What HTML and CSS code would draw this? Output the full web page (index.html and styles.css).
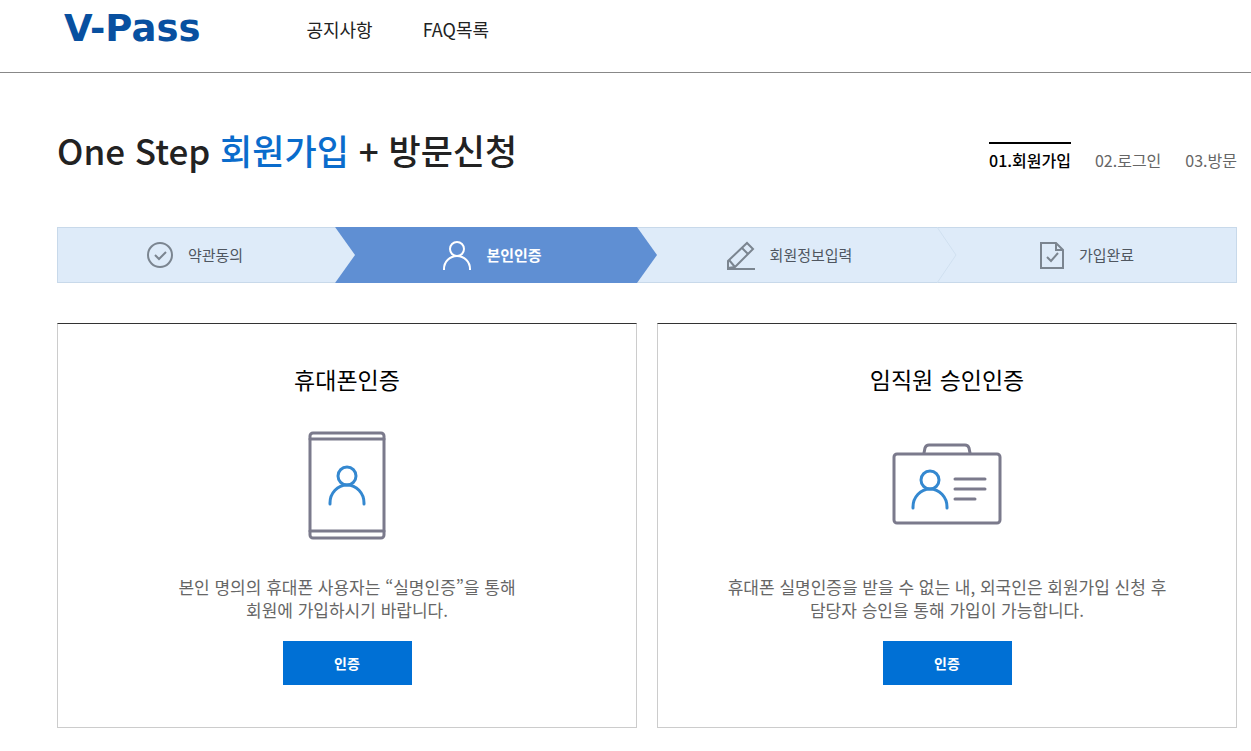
FILE: index.html
```html
<!DOCTYPE html>
<html lang="ko">
<head>
    <meta charset="UTF-8">
    <meta name="viewport" content="width=device-width, initial-scale=1.0">
    <title>V-Pass 회원가입</title>
    <link rel="stylesheet" href="styles.css">
</head>
<body>
    <header class="header">
        <a class="logo" href="#">V-Pass</a>
        <nav class="gnb">
            <a href="#">공지사항</a>
            <a href="#">FAQ목록</a>
        </nav>
    </header>

    <main class="container">
        <div class="title-row">
            <h1>One Step <span>회원가입</span> + 방문신청</h1>
            <nav class="tabs">
                <a class="on" href="#">01.회원가입</a>
                <a href="#">02.로그인</a>
                <a href="#">03.방문</a>
            </nav>
        </div>

        <ol class="steps">
            <li class="step">
                <svg class="icon" width="28" height="30" viewBox="0 0 28 30">
                    <circle cx="14" cy="15" r="12"/>
                    <path d="M9 15l4 4 7-7"/>
                </svg>
                <span>약관동의</span>
                <svg class="arrow" viewBox="0 0 20 56"><path d="M0 0L20 28L0 56z"/></svg>
            </li>
            <li class="step active">
                <svg class="icon" width="30" height="30" viewBox="0 0 30 30">
                    <circle cx="15" cy="9" r="7"/>
                    <path d="M2 30v-1a13 13 0 0 1 26 0v1"/>
                </svg>
                <span>본인인증</span>
                <svg class="arrow" viewBox="0 0 20 56"><path d="M0 0L20 28L0 56z"/></svg>
            </li>
            <li class="step">
                <svg class="icon" width="30" height="30" viewBox="0 0 30 30">
                    <path d="M1 29h28"/>
                    <path d="M2 28v-7L21 3l6 6L9 27z"/>
                    <path d="M3 20l6 7M16 8l6 6"/>
                </svg>
                <span>회원정보입력</span>
                <svg class="arrow line" viewBox="0 0 20 56"><path d="M0 0L19 28L0 56"/></svg>
            </li>
            <li class="step">
                <svg class="icon" width="26" height="30" viewBox="0 0 26 30">
                    <path d="M2 3h15l7 7v18H2z"/>
                    <path d="M17 3v7h7M8 17l4 4 7-8"/>
                </svg>
                <span>가입완료</span>
            </li>
        </ol>

        <div class="cards">
            <section class="card">
                <h2>휴대폰인증</h2>
                <svg class="picture" width="110" height="110" viewBox="0 0 110 110">
                    <rect x="18" y="3" width="74" height="105" rx="3"/>
                    <path d="M18 9h74M18 101h74"/>
                    <g class="person">
                        <circle cx="55" cy="46" r="9"/>
                        <path d="M38 74v-1a17 18 0 0 1 34 0v1"/>
                    </g>
                </svg>
                <p>본인 명의의 휴대폰 사용자는 “실명인증”을 통해<br>회원에 가입하시기 바랍니다.</p>
                <button type="button">인증</button>
            </section>
            <section class="card">
                <h2>임직원 승인인증</h2>
                <svg class="picture" width="110" height="110" viewBox="0 0 110 110">
                    <rect x="2" y="24" width="106" height="69" rx="3"/>
                    <path d="M32 23l1-5q1-3 4-3h36q3 0 4 3l1 5"/>
                    <path d="M63 49h30M63 59h30M63 69h20"/>
                    <g class="person">
                        <circle cx="38" cy="50" r="9"/>
                        <path d="M21 78v-1a17 18 0 0 1 34 0v1"/>
                    </g>
                </svg>
                <p>휴대폰 실명인증을 받을 수 없는 내, 외국인은 회원가입 신청 후<br>담당자 승인을 통해 가입이 가능합니다.</p>
                <button type="button">인증</button>
            </section>
        </div>
    </main>
</body>
</html>
```
FILE: styles.css
```css
* {
    box-sizing: border-box;
}

body {
    margin: 0;
    background-color: #fff;
    color: #222;
    font-family: "Noto Sans CJK KR", sans-serif;
}

h1, h2, p, ol {
    margin: 0;
    padding: 0;
}

a {
    color: inherit;
    text-decoration: none;
}

.header {
    display: flex;
    align-items: center;
    height: 73px;
    padding: 0 64px 14px;
    border-bottom: 1px solid #888;
}

.logo {
    color: #0850a0;
    font-family: "DejaVu Sans", sans-serif;
    font-size: 37px;
    font-weight: bold;
    line-height: 40px;
}

.gnb {
    display: flex;
    gap: 50px;
    margin-left: 106px;
    font-size: 18px;
}

.container {
    padding: 48px 14px 24px 57px;
}

.title-row {
    display: flex;
    justify-content: space-between;
    align-items: flex-start;
    margin-bottom: 48px;
}

h1 {
    font-size: 35px;
    font-weight: 500;
    line-height: 58px;
}

h1 span {
    color: #0a6ccc;
}

.tabs {
    display: flex;
    gap: 24px;
    margin-top: 21px;
    color: #666;
    font-size: 16px;
    line-height: 32px;
}

.tabs a {
    border-top: 2px solid transparent;
}

.tabs .on {
    border-top-color: #000;
    color: #000;
    font-weight: 500;
}

.steps {
    display: grid;
    grid-template-columns: 278fr 302fr 300fr 300fr;
    height: 56px;
    margin-bottom: 40px;
    list-style: none;
}

.step {
    position: relative;
    display: flex;
    justify-content: center;
    align-items: center;
    gap: 14px;
    border: solid #c8d9ea;
    border-width: 1px 0;
    background-color: #deebf9;
    color: #4f5660;
    font-size: 15px;
    line-height: 24px;
}

.step:first-child {
    padding-right: 4px;
    border-left-width: 1px;
}

.step:nth-child(3) {
    padding-left: 4px;
}

.step:last-child {
    border-right-width: 1px;
}

.step span {
    padding-bottom: 1px;
}

.step.active {
    padding-left: 12px;
    border-color: #5f8fd3;
    background-color: #5f8fd3;
    color: #fff;
    font-weight: bold;
}

.icon {
    fill: none;
    stroke: #7b8590;
    stroke-width: 2;
}

.active .icon {
    stroke: #fff;
}

/* arrow lies over the start of the next step */
.arrow {
    position: absolute;
    top: -1px;
    left: 100%;
    z-index: 1;
    width: 20px;
    height: 56px;
    fill: #deebf9;
}

.active .arrow {
    fill: #5f8fd3;
}

.arrow.line {
    fill: none;
    stroke: #d0e0f0;
}

.cards {
    display: grid;
    grid-template-columns: 1fr 1fr;
    gap: 20px;
}

.card {
    display: flex;
    flex-direction: column;
    align-items: center;
    padding: 37px 20px 42px;
    border: 1px solid #ccc;
    border-top-color: #333;
    text-align: center;
}

.card h2 {
    color: #000;
    font-size: 23px;
    font-weight: 400;
    line-height: 36px;
}

.picture {
    margin: 33px 0 35px;
    fill: none;
    stroke: #7b7a8c;
    stroke-width: 3;
    stroke-linecap: round;
}

.person {
    stroke: #3488d0;
}

.card p {
    color: #666;
    font-size: 17px;
    line-height: 23px;
}

.card button {
    width: 129px;
    height: 44px;
    margin-top: 20px;
    border: 0;
    background-color: #0070d5;
    color: #fff;
    font-family: inherit;
    font-size: 14px;
    font-weight: bold;
    cursor: pointer;
}
```
